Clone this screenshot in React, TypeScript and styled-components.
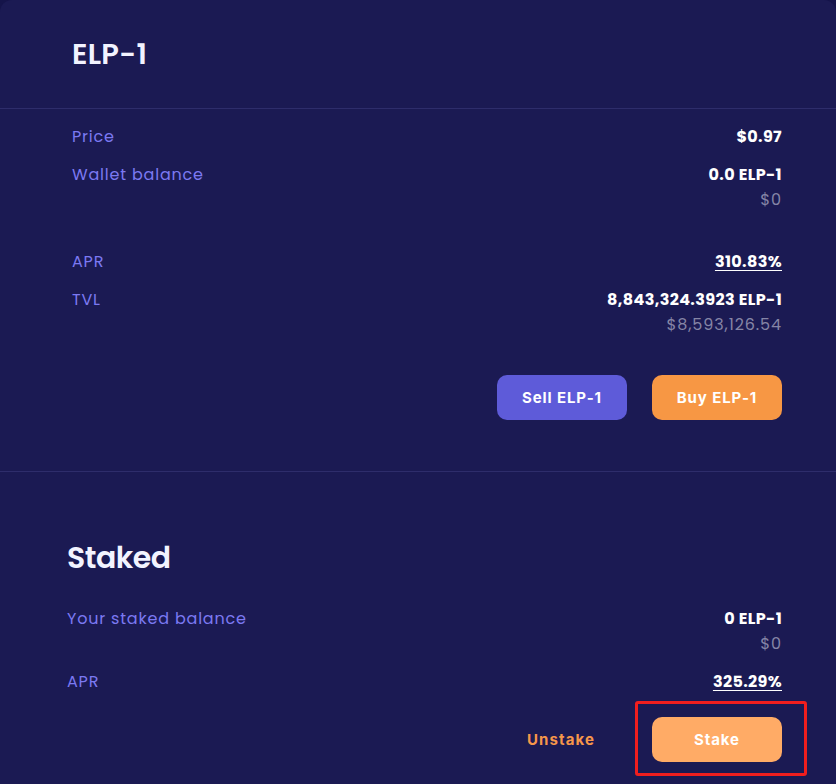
import React from "react";
import styled, { createGlobalStyle } from "styled-components";

const GlobalStyle = createGlobalStyle`
  body {
    margin: 0;
    background: #15144a;
    font-family: "Poppins", "Inter", "Open Sans", sans-serif;
  }
`;

const Card = styled.div`
  background: #1b1a53;
  border-top-left-radius: 12px;
  border-top-right-radius: 12px;
  min-height: 784px;
  color: #fff;
`;

const Header = styled.div`
  height: 108px;
  padding: 0 72px;
  display: flex;
  align-items: center;
  border-bottom: 1px solid #2e2d6b;
  box-sizing: content-box;
`;

const Title = styled.h1<{ $size?: number }>`
  margin: 0;
  font-size: ${(p) => p.$size ?? 29}px;
  font-weight: 600;
  letter-spacing: ${(p) => (p.$size ? "-0.5px" : "0.3px")};
  color: #f2f3ff;
`;

const Section = styled.div<{ $left: number; $bordered?: boolean }>`
  padding: 0 54px 0 ${(p) => p.$left}px;
  border-bottom: ${(p) => (p.$bordered ? "1px solid #2e2d6b" : "none")};
`;

const Rows = styled.div<{ $top: number }>`
  padding-top: ${(p) => p.$top}px;
  display: flex;
  flex-direction: column;
  gap: 14px;
`;

const Row = styled.div`
  display: flex;
  justify-content: space-between;
  align-items: flex-start;
`;

const Spacer = styled.div`
  height: 10px;
`;

const Label = styled.span`
  font-size: 16px;
  line-height: 24px;
  color: #7b79f2;
  letter-spacing: 0.8px;
`;

const Values = styled.div`
  display: flex;
  flex-direction: column;
  align-items: flex-end;
  gap: 1px;
`;

const Value = styled.span<{ $link?: boolean }>`
  font-size: 16px;
  line-height: 24px;
  font-weight: 700;
  color: #fff;
  letter-spacing: 0.35px;
  text-decoration: ${(p) => (p.$link ? "underline" : "none")};
  text-underline-offset: 3px;
  cursor: ${(p) => (p.$link ? "pointer" : "default")};
`;

const SubValue = styled.span`
  font-size: 16px;
  line-height: 24px;
  color: #8585a6;
  letter-spacing: 0.9px;
`;

const Actions = styled.div<{ $top: number; $bottom: number }>`
  display: flex;
  justify-content: flex-end;
  align-items: center;
  gap: 25px;
  padding-top: ${(p) => p.$top}px;
  padding-bottom: ${(p) => p.$bottom}px;
`;

const Button = styled.button<{ $bg: string }>`
  width: 130px;
  height: 45px;
  border: none;
  border-radius: 10px;
  background: ${(p) => p.$bg};
  color: #fff;
  font-family: "Inter", sans-serif;
  font-size: 15px;
  font-weight: 700;
  letter-spacing: 0.9px;
  cursor: pointer;
`;

const TextButton = styled.button`
  background: none;
  border: none;
  padding: 0;
  margin-right: 32px;
  color: #f6964a;
  font-family: "Inter", sans-serif;
  font-size: 15px;
  font-weight: 700;
  letter-spacing: 1.1px;
  cursor: pointer;
`;

const Highlight = styled.div`
  margin: -16px -25px -14px -17px;
  padding: 13px 22px 11px 14px;
  border: 3px solid #f01e1e;
  border-radius: 3px;
  display: flex;
`;

const TitleWrap = styled.div`
  padding-top: 66px;
  height: 40px;
  display: flex;
  align-items: center;
`;

export default function App() {
  return (
    <>
      <GlobalStyle />
      <Card>
        <Header>
          <Title>ELP-1</Title>
        </Header>
        <Section $left={72} $bordered>
          <Rows $top={16}>
            <Row>
              <Label>Price</Label>
              <Value>$0.97</Value>
            </Row>
            <Row>
              <Label>Wallet balance</Label>
              <Values>
                <Value>0.0 ELP-1</Value>
                <SubValue>$0</SubValue>
              </Values>
            </Row>
            <Spacer />
            <Row>
              <Label>APR</Label>
              <Value $link>310.83%</Value>
            </Row>
            <Row>
              <Label>TVL</Label>
              <Values>
                <Value>8,843,324.3923 ELP-1</Value>
                <SubValue>$8,593,126.54</SubValue>
              </Values>
            </Row>
          </Rows>
          <Actions $top={38} $bottom={51}>
            <Button $bg="#5e5bd9">Sell ELP-1</Button>
            <Button $bg="#f79744">Buy ELP-1</Button>
          </Actions>
        </Section>
        <Section $left={67}>
          <TitleWrap>
            <Title $size={30}>Staked</Title>
          </TitleWrap>
          <Rows $top={29}>
            <Row>
              <Label>Your staked balance</Label>
              <Values>
                <Value>0 ELP-1</Value>
                <SubValue>$0</SubValue>
              </Values>
            </Row>
            <Row>
              <Label>APR</Label>
              <Value $link>325.29%</Value>
            </Row>
          </Rows>
          <Actions $top={23} $bottom={22}>
            <TextButton>Unstake</TextButton>
            <Highlight>
              <Button $bg="#ffab66">Stake</Button>
            </Highlight>
          </Actions>
        </Section>
      </Card>
    </>
  );
}
